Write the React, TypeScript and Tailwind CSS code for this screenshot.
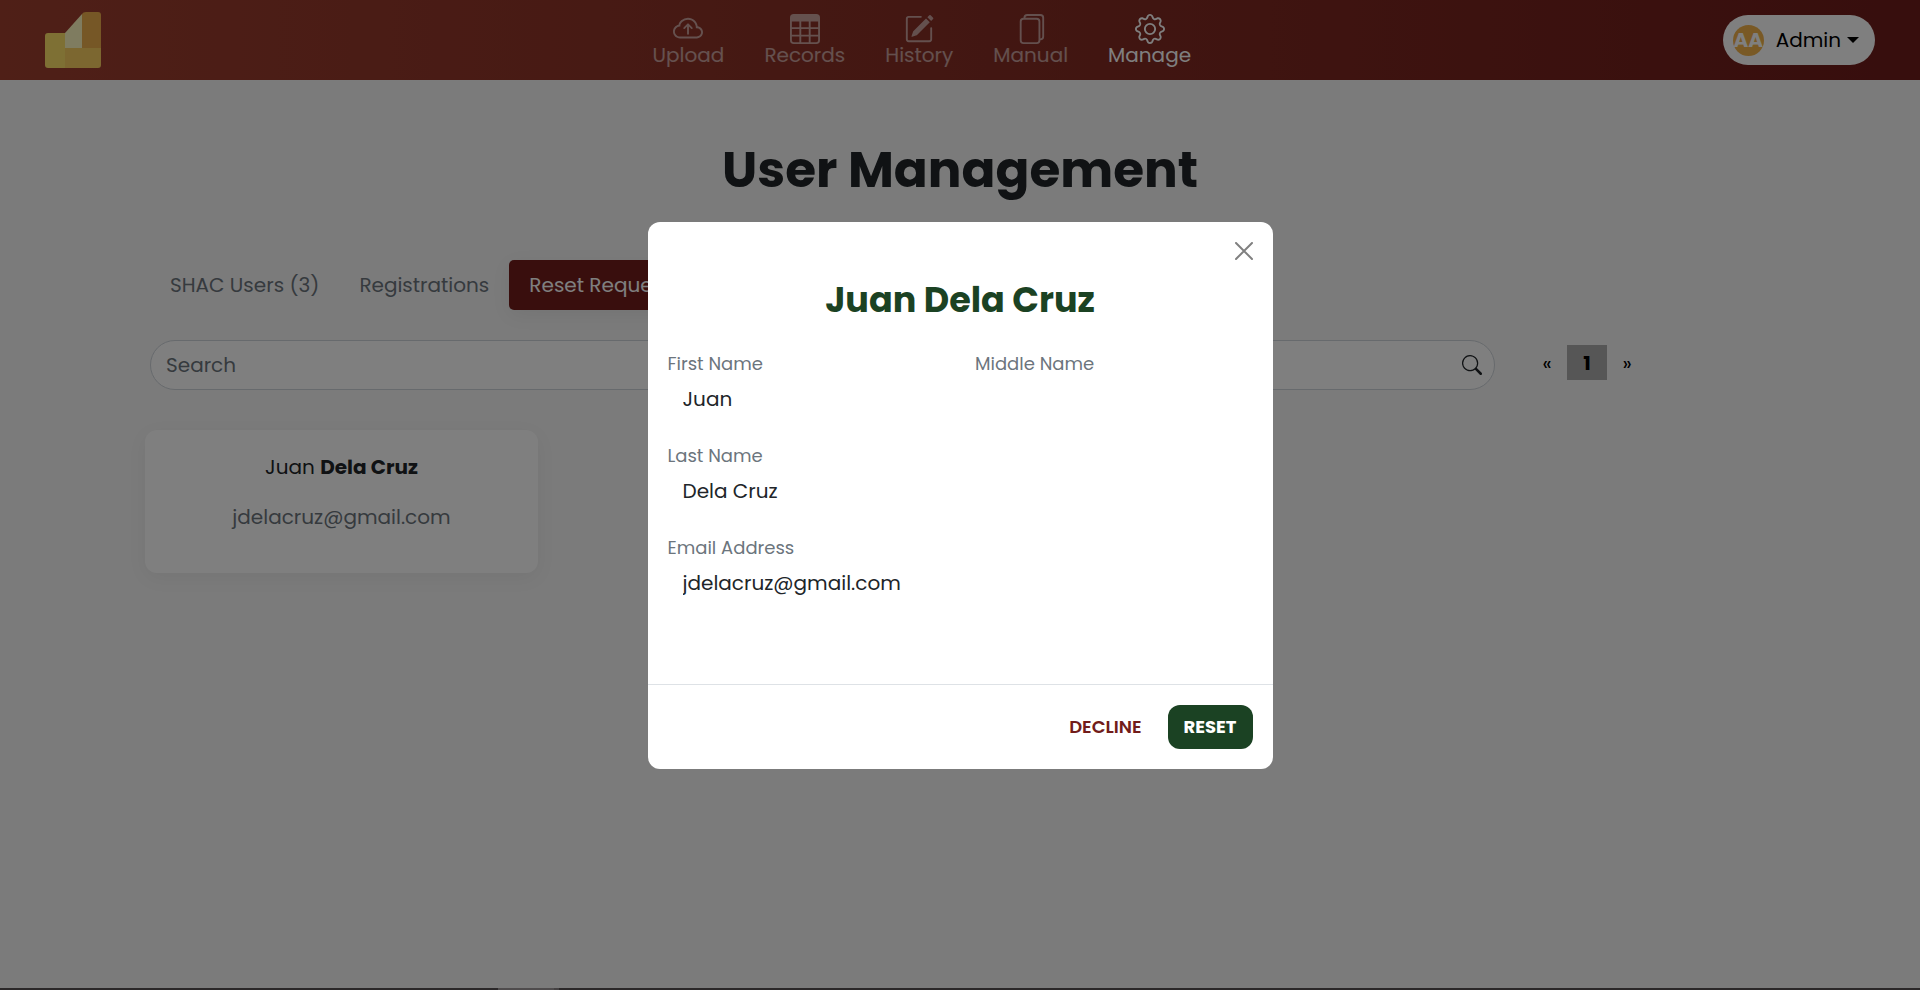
import type { ReactNode } from "react";
import { BsCloudArrowUp, BsFiles, BsGear, BsPencilSquare, BsSearch, BsTable } from "react-icons/bs";

type NavItem = { label: string; icon: ReactNode; active?: boolean };

const navItems: NavItem[] = [
  { label: "Upload", icon: <BsCloudArrowUp size={30} /> },
  { label: "Records", icon: <BsTable size={30} /> },
  { label: "History", icon: <BsPencilSquare size={30} /> },
  { label: "Manual", icon: <BsFiles size={30} /> },
  { label: "Manage", icon: <BsGear size={30} />, active: true },
];

function Logo() {
  return (
    <svg viewBox="0 0 56 56" className="size-14" role="img" aria-label="Home">
      <path d="M3 21h17v35H3a3 3 0 0 1-3-3V24a3 3 0 0 1 3-3z" fill="#fce068" />
      <path d="M20 21 37 2v34H20z" fill="#fff8c0" />
      <path d="M37 2q1-2 4-2h12a3 3 0 0 1 3 3v33H37z" fill="#ecaf4c" />
      <path d="M20 36h36v17a3 3 0 0 1-3 3H20z" fill="#f8ce60" />
    </svg>
  );
}

function Navbar() {
  return (
    <header className="flex h-20 items-center justify-between bg-linear-to-r from-[#9e3f2f] to-[#6e1c1a] px-[45px]">
      <a href="#home" className="mr-5">
        <Logo />
      </a>
      <nav className="flex">
        {navItems.map((item) => (
          <a
            key={item.label}
            href={`#${item.label.toLowerCase()}`}
            className={`flex flex-col items-center px-5 text-[20px] leading-[22px] ${
              item.active ? "text-white" : "text-white/55"
            }`}
          >
            {item.icon}
            {item.label}
          </a>
        ))}
      </nav>
      <button type="button" className="flex h-[50px] items-center rounded-full bg-white pr-4 pl-[10px] text-[20px] text-black">
        <span className="flex size-[31px] items-center justify-center rounded-full bg-[#f3b24b] text-[20px] font-bold text-white">
          AA
        </span>
        <span className="ml-3">Admin</span>
        <span className="ml-[6px] border-x-[6px] border-t-[6px] border-x-transparent border-t-black" />
      </button>
    </header>
  );
}

function Tabs() {
  return (
    <div role="tablist" className="flex text-[20px] leading-[30px] text-[#6c757d]">
      <button type="button" role="tab" className="px-5 py-[10px]">
        SHAC Users (3)
      </button>
      <button type="button" role="tab" className="px-5 py-[10px]">
        Registrations
      </button>
      <button
        type="button"
        role="tab"
        aria-selected="true"
        className="rounded-[5px] bg-[#721d1b] px-5 py-[10px] text-white shadow-[0_5px_20px_rgba(0,0,0,0.06)]"
      >
        Reset Requests (1)
      </button>
    </div>
  );
}

function Field({ id, label, value }: { id: string; label: string; value: string }) {
  return (
    <div>
      <label htmlFor={id} className="block text-[18px] leading-7 text-[#6c757d]">
        {label}
      </label>
      <input
        id={id}
        readOnly
        defaultValue={value}
        className="block h-[42px] w-full bg-transparent px-[15px] text-[20px] text-[#212529] outline-none"
      />
    </div>
  );
}

function UserModal() {
  return (
    <div className="fixed inset-0 flex items-center justify-center bg-black/50">
      <section role="dialog" aria-modal="true" aria-labelledby="user-name" className="w-[625px] rounded-xl bg-white">
        <div className="flex justify-end px-5 pt-5">
          <button type="button" aria-label="Close" className="text-[#808080]">
            <svg viewBox="0 0 18 18" className="size-[18px]" fill="none" stroke="currentColor" strokeWidth="2" strokeLinecap="round">
              <path d="M1 1l16 16M17 1L1 17" />
            </svg>
          </button>
        </div>
        <h2 id="user-name" className="mt-[18px] text-center text-[35px] leading-[44px] font-bold text-[#1b4223]">
          Juan Dela Cruz
        </h2>
        <div className="mt-7 grid grid-cols-2 gap-x-[30px] gap-y-[22px] px-5 pb-20">
          <Field id="first-name" label="First Name" value="Juan" />
          <Field id="middle-name" label="Middle Name" value="" />
          <div className="col-span-2">
            <Field id="last-name" label="Last Name" value="Dela Cruz" />
          </div>
          <div className="col-span-2">
            <Field id="email" label="Email Address" value="jdelacruz@gmail.com" />
          </div>
        </div>
        <footer className="flex justify-end gap-[10px] border-t border-[#dee2e6] p-5 text-[18px]">
          <button type="button" className="h-11 rounded-xl px-4 font-semibold text-[#721c1a]">
            DECLINE
          </button>
          <button type="button" className="h-11 rounded-xl bg-[#1b4223] px-4 font-bold text-white">
            RESET
          </button>
        </footer>
      </section>
    </div>
  );
}

export default function App() {
  return (
    <div className="flex min-h-screen flex-col bg-[#f6f6f6] font-['Poppins','Inter',sans-serif] text-[#212529]">
      <Navbar />
      <main className="flex-1 px-[145px] pb-10">
        <h1 className="pt-[60px] text-center text-[50px] leading-[60px] font-bold">User Management</h1>
        <div className="mt-[60px] px-[5px]">
          <Tabs />
          <div className="mt-[30px] flex items-start">
            <label className="flex h-[50px] w-[1345px] items-center rounded-full border border-[#ced4da] bg-white pr-3 pl-[15px]">
              <input
                type="search"
                aria-label="Search"
                placeholder="Search"
                className="min-w-0 flex-1 bg-transparent text-[20px] outline-none placeholder:text-[#6c757d]"
              />
              <BsSearch size={20} />
            </label>
            <div className="ml-8 flex items-center pt-[5px] text-black">
              <button type="button" aria-label="Previous page" className="h-[35px] w-10 text-[20px]">
                «
              </button>
              <button type="button" className="h-[35px] w-10 bg-[#adadad] text-[20px] font-bold">
                1
              </button>
              <button type="button" aria-label="Next page" className="h-[35px] w-10 text-[20px]">
                »
              </button>
            </div>
          </div>
        </div>
        <article className="mt-10 h-[143px] w-[393px] rounded-xl bg-white pt-[22px] text-center text-[20px] leading-[30px] shadow-[0_5px_20px_rgba(0,0,0,0.05)]">
          <p className="text-[#212529]">
            Juan <strong className="font-bold">Dela Cruz</strong>
          </p>
          <p className="mt-5 text-[#6c757d]">jdelacruz@gmail.com</p>
        </article>
      </main>
      <div className="flex h-[2px] bg-[#565052] pl-[498px]">
        <span className="w-14 bg-[#9e989a]" />
        <span className="w-[5px] bg-[#888284]" />
      </div>
      <UserModal />
    </div>
  );
}
